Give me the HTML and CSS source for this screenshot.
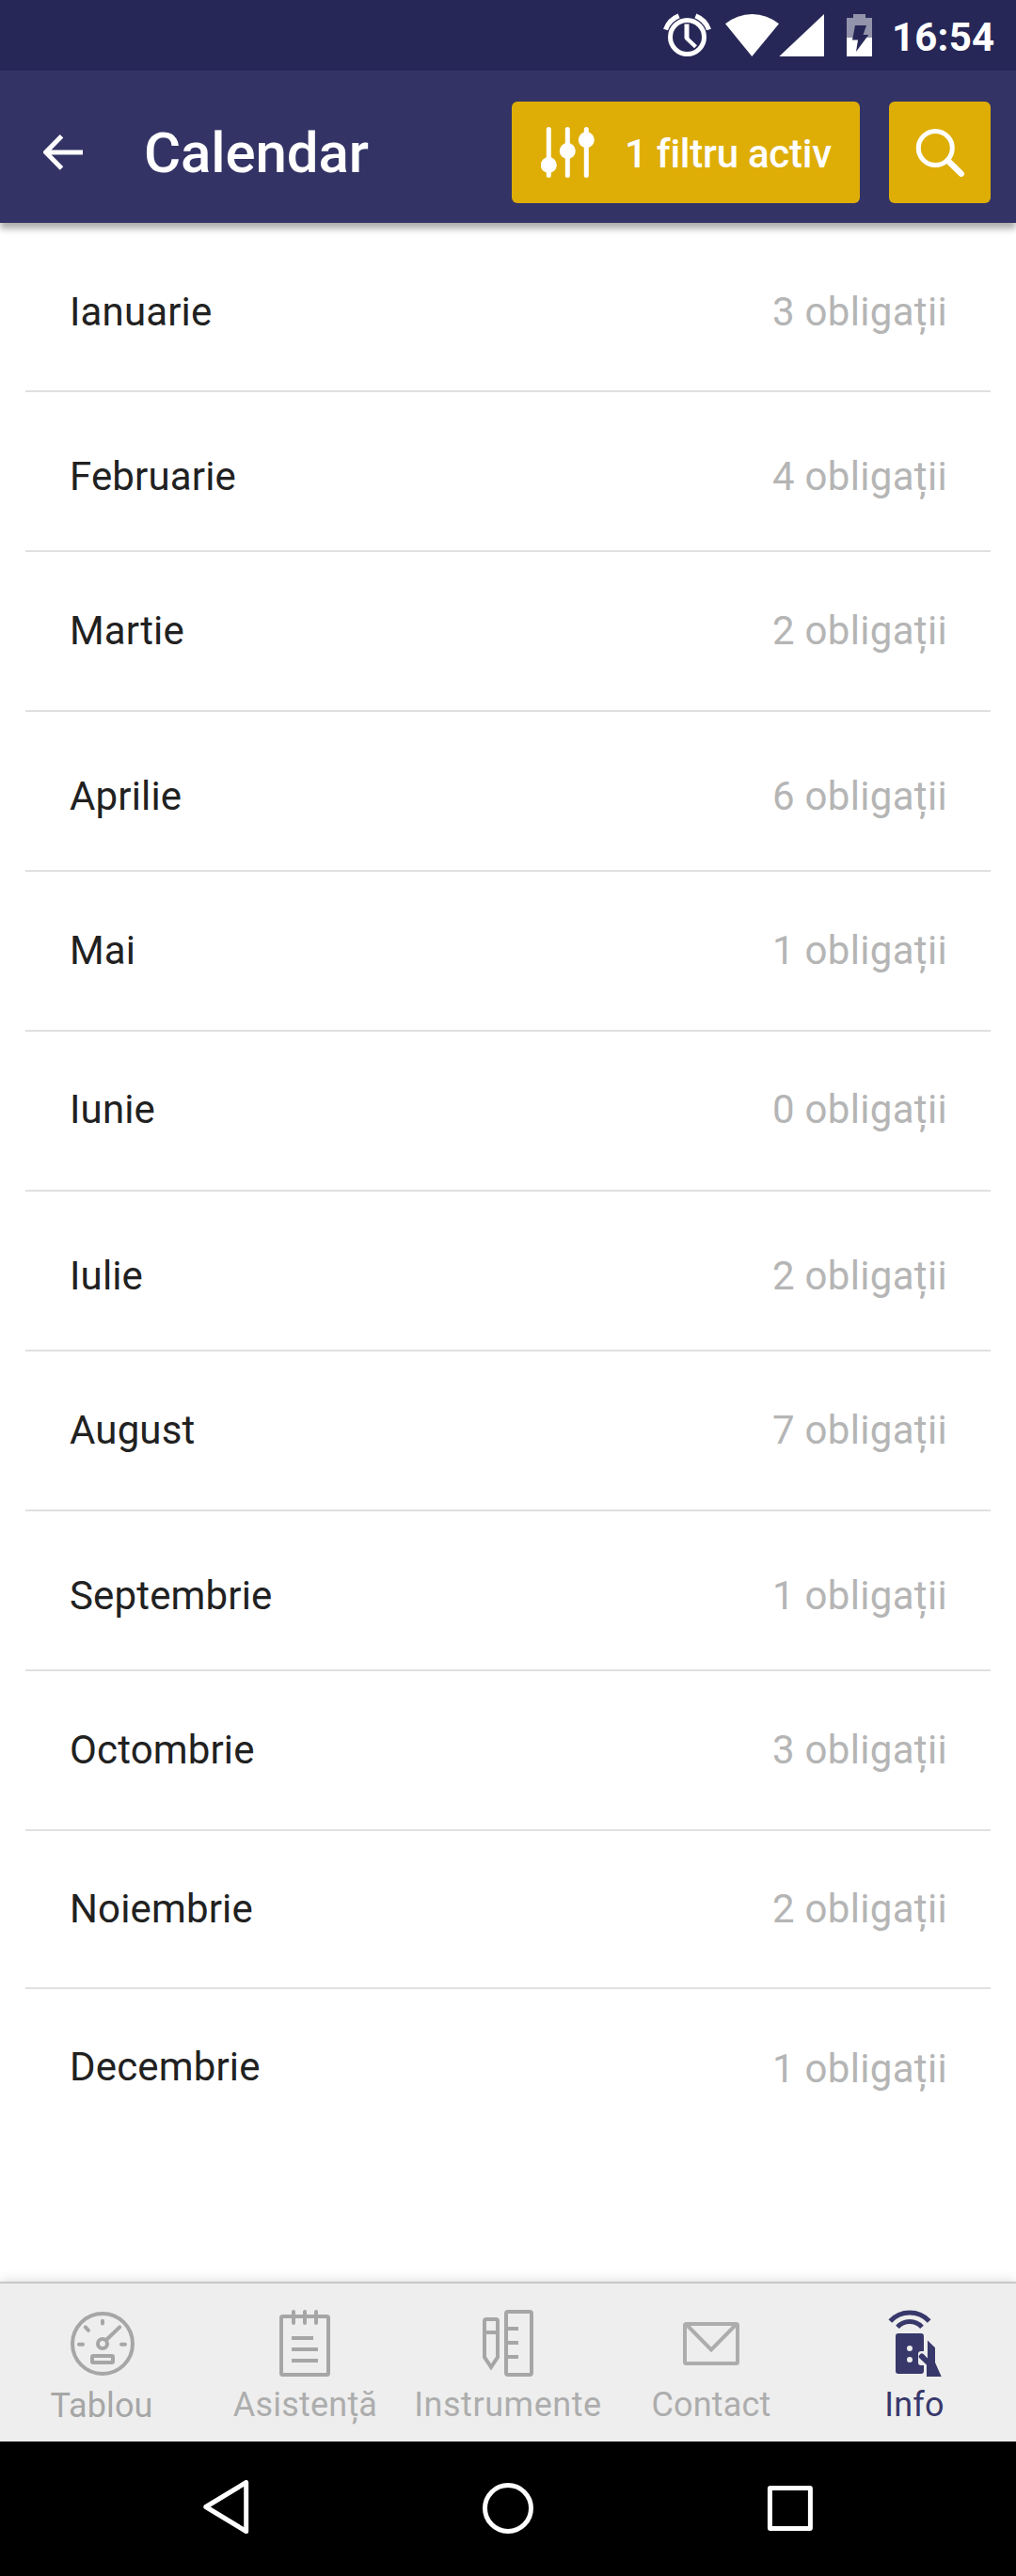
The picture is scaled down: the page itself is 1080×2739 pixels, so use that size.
FILE: index.html
```html
<!DOCTYPE html>
<html lang="ro">
<head>
<meta charset="utf-8">
<title>Calendar</title>
<link rel="stylesheet" href="styles.css">
</head>
<body>
<div class="screen">
  <div class="status">
    <svg class="alarm" width="53" height="47" viewBox="704 14 53 47">
      <circle cx="730.5" cy="39.5" r="18" stroke-width="5"/>
      <path d="M730 25.5V41" stroke-width="5"/>
      <path d="M729.2 40L739.5 49.8" stroke-width="4.2"/>
      <path d="M707.5 31.5A24.4 24.4 0 0 1 721.6 16.9M753.5 31.5A24.4 24.4 0 0 0 739.4 16.9" stroke-width="5.2"/>
    </svg>
    <svg class="wifi" width="57" height="45" viewBox="771 15 57 45"><path d="M799.3 60L771 25.3A45 45 0 0 1 828 25.3Z"/></svg>
    <svg class="signal" width="48" height="45" viewBox="828 15 48 45"><path d="M828.3 60L876 15V60Z"/></svg>
    <svg class="battery" width="27" height="45" viewBox="900 15 27 45">
      <path class="empty" d="M907 15H920V19H927V40H900V19H907Z"/>
      <path class="charge" d="M900 40H927V60H900Z"/>
      <path class="bolt" d="M909 27H921L917.5 37H923.3L910 55L912 42.5H906Z"/>
    </svg>
    <span class="time">16:54</span>
  </div>

  <header class="appbar">
    <svg class="back" width="42" height="40" viewBox="46 142 42 40"><path d="M88 161.9H49M65.5 144.8L48.6 161.9L65.5 179"/></svg>
    <h1 class="title">Calendar</h1>
    <button class="filter">
      <svg class="sliders" width="58" height="54" viewBox="575 135 58 54">
        <path d="M583.3 137.5V186.5M603.3 137.5V186.5M623.3 137.5V186.5"/>
        <circle cx="583.3" cy="175.5" r="8.5"/><circle cx="603.3" cy="160.5" r="8.5"/><circle cx="623.3" cy="148.7" r="8.5"/>
      </svg>
      <span class="filter-text">1 filtru activ</span>
    </button>
    <button class="search">
      <svg width="108" height="108" viewBox="945 108 108 108">
        <circle cx="994.3" cy="157.5" r="18" stroke-width="5"/>
        <path d="M1007.5 170.7L1021.8 184.8" stroke-width="6.4" stroke-linecap="round"/>
      </svg>
    </button>
  </header>

  <main class="months">
    <div class="month first"><span>Ianuarie</span><span class="count">3 obligații</span></div>
    <div class="month low"><span>Februarie</span><span class="count">4 obligații</span></div>
    <div class="month"><span>Martie</span><span class="count">2 obligații</span></div>
    <div class="month low"><span>Aprilie</span><span class="count">6 obligații</span></div>
    <div class="month"><span>Mai</span><span class="count">1 obligații</span></div>
    <div class="month high"><span>Iunie</span><span class="count">0 obligații</span></div>
    <div class="month low"><span>Iulie</span><span class="count">2 obligații</span></div>
    <div class="month"><span>August</span><span class="count">7 obligații</span></div>
    <div class="month low"><span>Septembrie</span><span class="count">1 obligații</span></div>
    <div class="month"><span>Octombrie</span><span class="count">3 obligații</span></div>
    <div class="month short"><span>Noiembrie</span><span class="count">2 obligații</span></div>
    <div class="month last"><span>Decembrie</span><span class="count">1 obligații</span></div>
  </main>

  <nav class="tabs">
    <a class="tab dark">
      <svg width="216" height="80" viewBox="0 0 216 80">
        <circle cx="109" cy="44" r="32"/><circle cx="109" cy="44" r="5"/>
        <path stroke-linecap="round" d="M113.2 39.8L127.2 26.4M109 19.8V22.6M90.8 26.4L94 29.8M84 44.8H88M129 44.8H133"/>
        <rect x="98" y="57" width="22" height="7" rx="1"/>
      </svg>
      <span class="label board">Tablou</span>
    </a>
    <a class="tab">
      <svg class="dark" width="216" height="80" viewBox="0 0 216 80">
        <rect x="83" y="15" width="50" height="62" rx="1.5"/>
        <path stroke-linecap="round" d="M96 10V22M108 10V22M120 10V22"/>
        <path d="M94 38H117M94 50H122M94 62H122"/>
      </svg>
      <span class="label help">Asistență</span>
    </a>
    <a class="tab">
      <svg class="dark" width="216" height="80" viewBox="0 0 216 80">
        <path d="M83 58.4V20Q83 18 85 18H95Q97 18 97 20V58.4L90 68.8ZM83 32H97"/>
        <rect x="106" y="10" width="27" height="67" rx="2"/>
        <path d="M108 28H119M108 43H119M108 58H119"/>
      </svg>
      <span class="label tools">Instrumente</span>
    </a>
    <a class="tab">
      <svg width="216" height="80" viewBox="0 0 216 80">
        <rect x="80" y="23" width="56" height="42" rx="1.5"/>
        <path d="M82 24L108 50.5L134 24"/>
      </svg>
      <span class="label">Contact</span>
    </a>
    <a class="tab active">
      <svg width="216" height="80" viewBox="0 0 216 80">
        <path stroke-width="5" d="M82.3 20A28.3 28.3 0 0 1 123.7 20M90 26.3A17.5 17.5 0 0 1 116 26.3"/>
        <path class="solid" fill-rule="evenodd" d="M91 33H115Q118 33 118 36V52H115Q112 52 112 55V64Q112 67 115 67H118V73Q118 76 115 76H91Q88 76 88 73V36Q88 33 91 33ZM103 46A3 3 0 0 0 103 52A3 3 0 0 0 103 46ZM103 58A3 3 0 0 0 103 64A3 3 0 0 0 103 58Z"/>
        <path class="solid" d="M122 40.5L130 48.3V64L136.7 79H121V66.5L113 59Q112 57.8 113 56.6L114.6 54.8Q116 53.6 117.3 54.8L122 59.5Z"/>
      </svg>
      <span class="label">Info</span>
    </a>
  </nav>

  <div class="sysnav">
    <svg width="60" height="60" viewBox="210 2637 60 60"><path stroke-linejoin="round" d="M218.8 2665.5L261.7 2639.5V2691.5Z"/></svg>
    <svg width="60" height="60" viewBox="510 2637 60 60"><circle cx="540" cy="2667" r="24.5"/></svg>
    <svg width="60" height="60" viewBox="810 2637 60 60"><rect x="818.4" y="2645.5" width="43" height="43" rx="0.5"/></svg>
  </div>
</div>
</body>
</html>
```

FILE: styles.css
```css
body {
  margin: 0;
  background: #fff;
  font-family: Roboto, "Liberation Sans", sans-serif;
}

svg {
  display: block;
  flex: none;
}

.screen {
  display: flex;
  flex-direction: column;
  width: 1080px;
  height: 2739px;
  overflow: hidden;
}

/* Status bar */
.status {
  box-sizing: border-box;
  display: flex;
  align-items: flex-start;
  height: 75px;
  padding: 15px 0 0 704px;
  background: #272757;
}

.alarm {
  margin: -1px 14px 0 0;
  fill: none;
  stroke: #fff;
}

.wifi,
.signal,
.battery .charge {
  fill: #fff;
}

.battery {
  margin-left: 24px;
}

.battery .empty {
  fill: #9393ab;
}

.battery .bolt {
  fill: #272757;
}

.time {
  margin-left: 21px;
  color: #fff;
  font-size: 42px;
  font-weight: 700;
  line-height: 49px;
  letter-spacing: 0.2px;
}

/* App bar */
.appbar {
  position: relative;
  box-sizing: border-box;
  display: flex;
  align-items: flex-start;
  height: 162px;
  padding: 33px 27px 0 46px;
  background: #333366;
  box-shadow: 0 6px 7px rgba(0, 0, 0, 0.33);
}

.back {
  margin-top: 34px;
  fill: none;
  stroke: #fff;
  stroke-width: 5;
}

.title {
  flex: 1;
  margin: 19px 0 0 65px;
  color: #fff;
  font-size: 60px;
  font-weight: 500;
  line-height: 71px;
  letter-spacing: -0.1px;
}

.filter,
.search {
  box-sizing: border-box;
  display: flex;
  align-items: flex-start;
  height: 108px;
  padding: 0;
  border: 0;
  border-radius: 6px;
  background: #deae07;
  color: #fff;
  font-family: inherit;
}

.filter {
  width: 370px;
  margin-right: 31px;
  padding: 27px 0 0 31px;
}

.search {
  width: 108px;
}

.sliders {
  fill: #fff;
  stroke: #fff;
  stroke-width: 5;
  stroke-linecap: round;
}

.sliders circle {
  stroke: none;
}

.filter-text {
  margin: 4px 0 0 31px;
  font-size: 42px;
  font-weight: 500;
  line-height: 49px;
  letter-spacing: -0.25px;
  white-space: nowrap;
}

.search svg {
  fill: none;
  stroke: #fff;
}

/* Month list */
.months {
  flex: 1;
  padding: 0 27px;
}

.month {
  box-sizing: border-box;
  display: flex;
  justify-content: space-between;
  height: 170px;
  padding: 59px 46px 0 47px;
  border-bottom: 2px solid #e0e0e0;
  color: #212121;
  font-size: 42px;
  line-height: 49px;
  letter-spacing: 0.15px;
}

.month.first {
  height: 180px;
  padding-top: 70px;
}

.month.low {
  padding-top: 65px;
}

.month.high {
  padding-top: 58px;
}

.month.short {
  height: 168px;
  padding-top: 58px;
}

.month.last {
  padding-top: 58px;
  border-bottom: 0;
}

.month.last .count {
  padding-top: 2px;
}

.count {
  color: #b5b5b5;
  letter-spacing: 0.32px;
}

/* Bottom tabs */
.tabs {
  box-sizing: border-box;
  display: flex;
  height: 170px;
  border-top: 2px solid #c8c8c8;
  background: #eee;
  box-shadow: 0 0 12px rgba(0, 0, 0, 0.16);
}

.tab {
  display: flex;
  flex-direction: column;
  align-items: center;
  width: 216px;
  padding-top: 20px;
  color: #adadad;
}

.dark {
  color: #a6a6a6;
}

.tab.active {
  color: #38386b;
}

.tab svg {
  fill: none;
  stroke: currentColor;
  stroke-width: 4;
}

.tab .solid {
  fill: currentColor;
  stroke: none;
}

.label {
  margin-top: 8px;
  font-size: 36px;
  line-height: 42px;
  letter-spacing: 0.2px;
}

.board {
  padding: 1px 0 0;
  letter-spacing: 0.1px;
}

.help {
  padding-left: 1px;
}

.tools {
  letter-spacing: 0.55px;
}

/* System navigation */
.sysnav {
  position: relative;
  box-sizing: border-box;
  display: grid;
  grid-template-columns: repeat(3, 300px);
  justify-content: center;
  justify-items: center;
  height: 143px;
  padding-top: 41px;
  background: #000;
}

.sysnav svg {
  fill: none;
  stroke: #fff;
  stroke-width: 5;
}
```
